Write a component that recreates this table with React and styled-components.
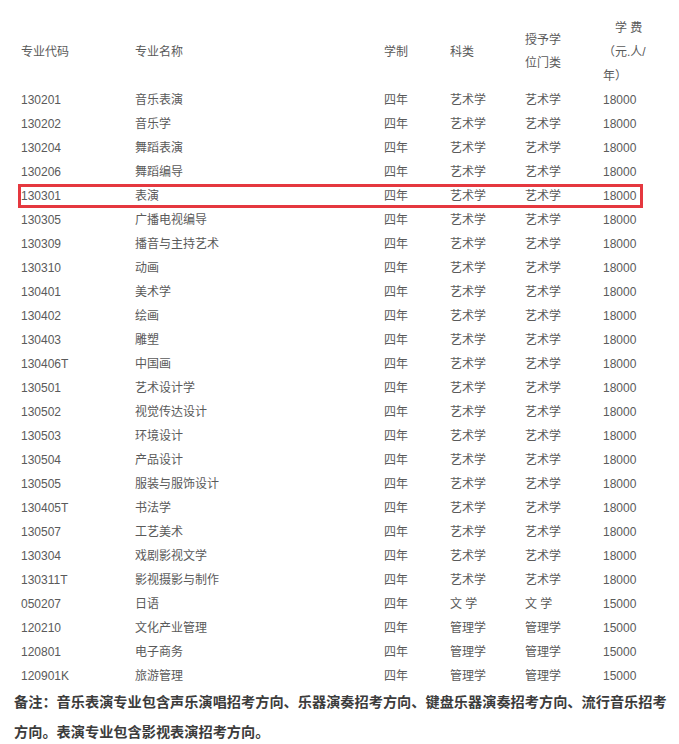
import styled, { createGlobalStyle } from "styled-components";

const GlobalStyle = createGlobalStyle`
  html, body {
    margin: 0;
    padding: 0;
    background: #fff;
  }
  body {
    font-family: "Liberation Sans", "Noto Sans CJK SC", sans-serif;
  }
`;

const Page = styled.div`
  width: 679px;
  height: 744px;
  padding-top: 16px;
  box-sizing: border-box;
  overflow: hidden;
`;

const Table = styled.div`
  margin-left: 18px;
  width: 625px;
`;

const Row = styled.div`
  display: grid;
  grid-template-columns: 114px 249px 66px 75px 78px 1fr;
  align-items: center;
  padding-left: 3px;
  height: ${(p) => (p.$head ? "72px" : "24px")};
  box-sizing: border-box;
  font-size: 12px;
  line-height: 24px;
  color: #5a5a5a;
  white-space: nowrap;
  box-shadow: ${(p) => (p.$mark ? "inset 0 0 0 3px #e5383f" : "none")};
`;

const Cell = styled.div`
  line-height: ${(p) => (p.$tight ? "23px" : "24px")};
`;

const Indent = styled.span`
  padding-left: 12px;
`;

const Note = styled.p`
  margin: -1px 0 0 14px;
  width: 660px;
  font-size: 14.2px;
  line-height: 30px;
  font-weight: bold;
  color: #3c3c3c;
`;

const rows = [
  ["130201", "音乐表演", "四年", "艺术学", "艺术学", "18000"],
  ["130202", "音乐学", "四年", "艺术学", "艺术学", "18000"],
  ["130204", "舞蹈表演", "四年", "艺术学", "艺术学", "18000"],
  ["130206", "舞蹈编导", "四年", "艺术学", "艺术学", "18000"],
  ["130301", "表演", "四年", "艺术学", "艺术学", "18000", true],
  ["130305", "广播电视编导", "四年", "艺术学", "艺术学", "18000"],
  ["130309", "播音与主持艺术", "四年", "艺术学", "艺术学", "18000"],
  ["130310", "动画", "四年", "艺术学", "艺术学", "18000"],
  ["130401", "美术学", "四年", "艺术学", "艺术学", "18000"],
  ["130402", "绘画", "四年", "艺术学", "艺术学", "18000"],
  ["130403", "雕塑", "四年", "艺术学", "艺术学", "18000"],
  ["130406T", "中国画", "四年", "艺术学", "艺术学", "18000"],
  ["130501", "艺术设计学", "四年", "艺术学", "艺术学", "18000"],
  ["130502", "视觉传达设计", "四年", "艺术学", "艺术学", "18000"],
  ["130503", "环境设计", "四年", "艺术学", "艺术学", "18000"],
  ["130504", "产品设计", "四年", "艺术学", "艺术学", "18000"],
  ["130505", "服装与服饰设计", "四年", "艺术学", "艺术学", "18000"],
  ["130405T", "书法学", "四年", "艺术学", "艺术学", "18000"],
  ["130507", "工艺美术", "四年", "艺术学", "艺术学", "18000"],
  ["130304", "戏剧影视文学", "四年", "艺术学", "艺术学", "18000"],
  ["130311T", "影视摄影与制作", "四年", "艺术学", "艺术学", "18000"],
  ["050207", "日语", "四年", "文 学", "文 学", "15000"],
  ["120210", "文化产业管理", "四年", "管理学", "管理学", "15000"],
  ["120801", "电子商务", "四年", "管理学", "管理学", "15000"],
  ["120901K", "旅游管理", "四年", "管理学", "管理学", "15000"],
];

export default function App() {
  return (
    <Page>
      <GlobalStyle />
      <Table>
        <Row $head>
          <Cell>专业代码</Cell>
          <Cell>专业名称</Cell>
          <Cell>学制</Cell>
          <Cell>科类</Cell>
          <Cell $tight>
            授予学
            <br />
            位门类
          </Cell>
          <Cell>
            <Indent>学 费</Indent>
            <br />
            （元.人/
            <br />
            年）
          </Cell>
        </Row>
        {rows.map(([code, name, len, cat, degree, fee, mark]) => (
          <Row key={code} $mark={mark}>
            <Cell>{code}</Cell>
            <Cell>{name}</Cell>
            <Cell>{len}</Cell>
            <Cell>{cat}</Cell>
            <Cell>{degree}</Cell>
            <Cell>{fee}</Cell>
          </Row>
        ))}
      </Table>
      <Note>
        备注：音乐表演专业包含声乐演唱招考方向、乐器演奏招考方向、键盘乐器演奏招考方向、流行音乐招考方向。表演专业包含影视表演招考方向。
      </Note>
    </Page>
  );
}
